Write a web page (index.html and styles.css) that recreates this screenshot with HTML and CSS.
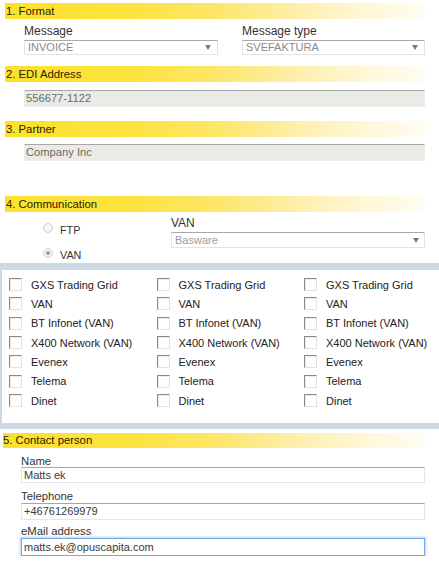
FILE: index.html
```html
<!DOCTYPE html>
<html>
<head>
<meta charset="utf-8">
<link rel="stylesheet" href="styles.css">
</head>
<body>
<div class="head head-first">1. Format</div>
<div class="format-row">
  <div class="field field-msg">
    <div class="label">Message</div>
    <div class="select"><span class="select-text">INVOICE</span><span class="arrow"></span></div>
  </div>
  <div class="field field-type">
    <div class="label">Message type</div>
    <div class="select"><span class="select-text">SVEFAKTURA</span><span class="arrow"></span></div>
  </div>
</div>

<div class="head head-edi">2. EDI Address</div>
<div class="readonly ro-edi">556677-1122</div>

<div class="head head-partner">3. Partner</div>
<div class="readonly ro-partner">Company Inc</div>

<div class="head head-comm">4. Communication</div>
<div class="comm-row">
  <div class="radios">
    <div class="radio-row"><span class="radio"></span><span class="radio-text">FTP</span></div>
    <div class="radio-row"><span class="radio checked"></span><span class="radio-text">VAN</span></div>
  </div>
  <div class="van-field">
    <div class="label van-label">VAN</div>
    <div class="select van-select"><span class="select-text van-text">Basware</span><span class="arrow"></span></div>
  </div>
</div>

<div class="panel">
  <div class="grid">
    <div class="cb"><span class="box"></span>GXS Trading Grid</div>
    <div class="cb"><span class="box"></span>GXS Trading Grid</div>
    <div class="cb"><span class="box"></span>GXS Trading Grid</div>
    <div class="cb"><span class="box"></span>VAN</div>
    <div class="cb"><span class="box"></span>VAN</div>
    <div class="cb"><span class="box"></span>VAN</div>
    <div class="cb"><span class="box"></span>BT Infonet (VAN)</div>
    <div class="cb"><span class="box"></span>BT Infonet (VAN)</div>
    <div class="cb"><span class="box"></span>BT Infonet (VAN)</div>
    <div class="cb"><span class="box"></span>X400 Network (VAN)</div>
    <div class="cb"><span class="box"></span>X400 Network (VAN)</div>
    <div class="cb"><span class="box"></span>X400 Network (VAN)</div>
    <div class="cb"><span class="box"></span>Evenex</div>
    <div class="cb"><span class="box"></span>Evenex</div>
    <div class="cb"><span class="box"></span>Evenex</div>
    <div class="cb"><span class="box"></span>Telema</div>
    <div class="cb"><span class="box"></span>Telema</div>
    <div class="cb"><span class="box"></span>Telema</div>
    <div class="cb"><span class="box"></span>Dinet</div>
    <div class="cb"><span class="box"></span>Dinet</div>
    <div class="cb"><span class="box"></span>Dinet</div>
  </div>
</div>

<div class="head head-contact">5. Contact person</div>
<div class="contact">
  <div class="clabel clabel-name">Name</div>
  <div class="cinput cinput-name">Matts ek</div>
  <div class="clabel clabel-tel">Telephone</div>
  <div class="cinput cinput-tel">+46761269979</div>
  <div class="clabel clabel-mail">eMail address</div>
  <div class="cinput cinput-mail">matts.ek@opuscapita.com</div>
</div>
</body>
</html>
```

FILE: styles.css
```css
html, body {
  margin: 0;
  padding: 0;
  background: #fff;
}
body {
  font-family: "Liberation Sans", Arial, sans-serif;
  color: #333;
  width: 439px;
  overflow: hidden;
}

.head {
  margin-left: 5px;
  width: 420px;
  height: 16px;
  line-height: 16px;
  font-size: 11.3px;
  color: #2b2100;
  padding-left: 1px;
  box-sizing: border-box;
  background: linear-gradient(to right, #fce12c 0%, #fde33e 30%, #fde669 50%, #feeea6 68%, #fff7d6 85%, #fffdf4 100%);
}
.head-first { margin-top: 3px; }
.head-edi { margin-top: 11px; }
.head-partner { margin-top: 14px; }
.head-comm { margin-top: 35px; }
.head-contact {
  margin-top: 4px;
  margin-left: 3px;
  width: 422px;
  height: 15px;
  line-height: 15px;
  padding-left: 0;
}

.format-row {
  display: flex;
  padding-left: 24px;
  margin-top: 4px;
}
.field-msg { width: 194px; }
.field-type { width: 183px; margin-left: 24px; }

.label {
  font-size: 12px;
  line-height: 16px;
  height: 16px;
  color: #333;
}

.select {
  margin-top: 1px;
  height: 15px;
  box-sizing: border-box;
  border: 1px solid #e4e4e4;
  border-top-color: #a9a9a9;
  background: #fff;
  display: flex;
  align-items: center;
  padding-left: 3px;
  padding-right: 6px;
}
.select-text {
  font-size: 11px;
  color: #8a8a8a;
  line-height: 13px;
}
.arrow {
  margin-left: auto;
  width: 0;
  height: 0;
  border-left: 3px solid transparent;
  border-right: 3px solid transparent;
  border-top: 5px solid #7a7a7a;
}

.readonly {
  margin-left: 24px;
  width: 401px;
  height: 17px;
  box-sizing: border-box;
  background: #ebebe5;
  border: 1px solid #ececec;
  border-top-color: #a8a8a8;
  font-size: 11.2px;
  line-height: 15px;
  color: #6a6a6a;
  padding-left: 1px;
}
.ro-edi { margin-top: 8px; }
.ro-partner { margin-top: 7px; }

.comm-row {
  display: flex;
  margin-top: 4px;
}
.radios {
  width: 128px;
  padding-left: 43px;
  padding-top: 6px;
  display: flex;
  flex-direction: column;
  gap: 13px;
}
.radio-row {
  display: flex;
  align-items: center;
  height: 12px;
}
.radio {
  width: 10px;
  height: 10px;
  box-sizing: border-box;
  border-radius: 50%;
  border: 1px solid #d3d3d3;
  background: radial-gradient(circle at 50% 40%, #ffffff 0%, #f2f2f2 60%, #e2e2e2 100%);
  position: relative;
}
.radio.checked::after {
  content: "";
  position: absolute;
  left: 2px;
  top: 2px;
  width: 4px;
  height: 4px;
  border-radius: 50%;
  background: #9a9a9a;
}
.radio-text {
  margin-left: 7px;
  font-size: 10.8px;
  color: #333;
  position: relative;
  top: 1.5px;
}
.van-field { width: 254px; }
.van-label { line-height: 14px; height: 14px; }
.van-select {
  margin-top: 2px;
  height: 16px;
  padding-left: 3px;
  padding-right: 5px;
}
.van-text { color: #9a9ca0; font-size: 11px; }

.panel {
  margin-top: 4px;
  border-top: 7px solid #cbd8e5;
  border-bottom: 6px solid #cbd8e5;
  border-left: 2px solid #cbd8e5;
  background: #fff;
  height: 153px;
  box-sizing: content-box;
}
.grid {
  display: grid;
  grid-template-columns: 147.5px 147.5px 140px;
  grid-auto-rows: 19.33px;
  padding-left: 7px;
  padding-top: 5px;
}
.cb {
  display: flex;
  align-items: center;
  font-size: 11px;
  color: #222;
  white-space: nowrap;
}
.box {
  width: 13px;
  height: 13px;
  box-sizing: border-box;
  border: 1px solid #e2e2e2;
  border-top-color: #8a8a8a;
  border-left-color: #8a8a8a;
  box-shadow: inset 1px 1px 0 #ececec;
  margin-right: 9px;
  flex-shrink: 0;
}

.contact { padding-left: 21px; }
.clabel {
  font-size: 11.3px;
  line-height: 12px;
  height: 12px;
  color: #333;
}
.clabel-name { margin-top: 7px; }
.clabel-tel { margin-top: 7px; }
.clabel-mail { margin-top: 5px; }
.cinput {
  width: 404px;
  box-sizing: border-box;
  border: 1px solid #e6e6e6;
  border-top-color: #a6a6a6;
  background: #fff;
  font-size: 11px;
  color: #3a3a3a;
  padding-left: 2px;
}
.cinput-name { height: 16px; line-height: 14px; }
.cinput-tel { margin-top: 1px; height: 17px; line-height: 15px; }
.cinput-mail {
  margin-top: 1px;
  height: 18px;
  line-height: 16px;
  border: 1px solid #78a9de;
  box-shadow: 0 0 2px 1px #b5d2f2;
}
```
